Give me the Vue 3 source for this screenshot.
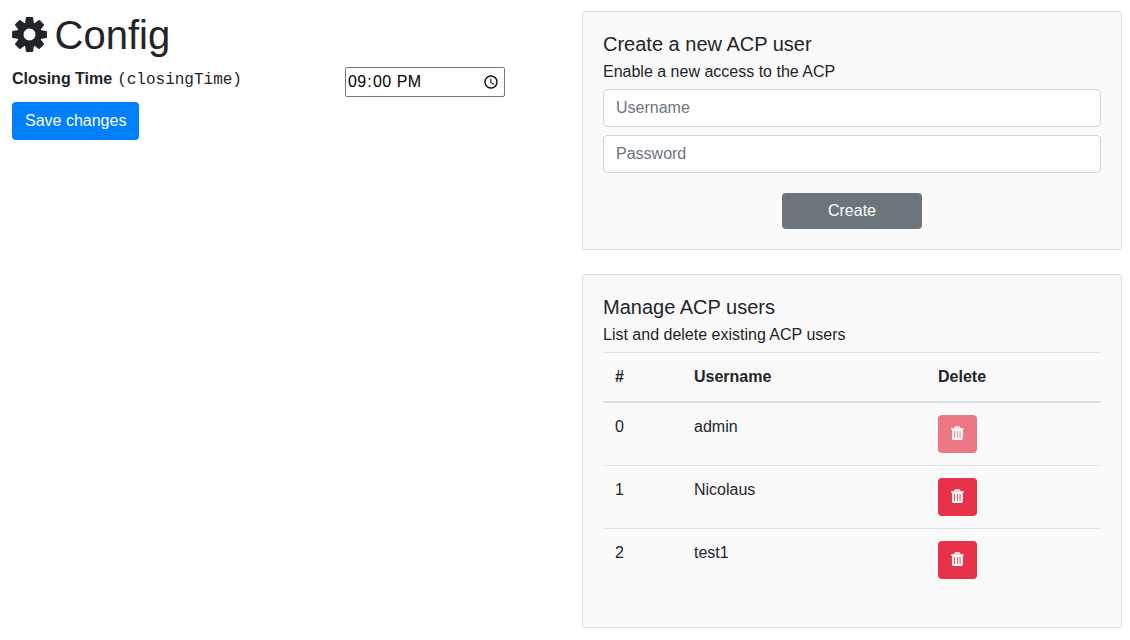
<script setup>
import { ref } from 'vue'

const closingTime = ref('21:00')
const username = ref('')
const password = ref('')
const users = ref([
  { name: 'admin', locked: true },
  { name: 'Nicolaus', locked: false },
  { name: 'test1', locked: false },
])
const teeth = [0, 45, 90, 135, 180, 225, 270, 315]
const remove = (i) => users.value.splice(i, 1)
</script>

<template>
  <main class="page">
    <section class="config">
      <h1>
        <svg class="gear" viewBox="-17.5 -17.5 35 35" fill="currentColor">
          <path fill-rule="evenodd" d="M-12.3 0a12.3 12.3 0 1 0 24.6 0a12.3 12.3 0 1 0 -24.6 0zM-6 0a6 6 0 1 0 12 0a6 6 0 1 0 -12 0z" />
          <path v-for="a in teeth" :key="a" :transform="`rotate(${a})`" d="M-4.6 -10.5L-3.6 -16.8Q-3.5 -17.4 -2.9 -17.4H2.9Q3.5 -17.4 3.6 -16.8L4.6 -10.5z" />
        </svg>
        <span>Config</span>
      </h1>
      <div class="setting">
        <label for="closing"><b>Closing Time</b> <code>(closingTime)</code></label>
        <input id="closing" v-model="closingTime" class="time" type="time" />
      </div>
      <button class="btn primary">Save changes</button>
    </section>

    <aside class="cards">
      <section class="card">
        <h5>Create a new ACP user</h5>
        <p>Enable a new access to the ACP</p>
        <input v-model="username" class="field" type="text" placeholder="Username" />
        <input v-model="password" class="field" type="password" placeholder="Password" />
        <button class="btn create">Create</button>
      </section>

      <section class="card">
        <h5>Manage ACP users</h5>
        <p>List and delete existing ACP users</p>
        <table>
          <colgroup><col class="c-id" /><col class="c-name" /><col /></colgroup>
          <thead>
            <tr><th>#</th><th>Username</th><th>Delete</th></tr>
          </thead>
          <tbody>
            <tr v-for="(user, i) in users" :key="user.name">
              <td>{{ i }}</td>
              <td>{{ user.name }}</td>
              <td>
                <button class="btn danger" :disabled="user.locked" @click="remove(i)">
                  <svg width="13" height="14" viewBox="0 0 13 14">
                    <path d="M3.8 2.4V1.9Q3.8 1 4.7 1H8Q8.9 1 8.9 1.9V2.4" fill="none" stroke="#fff" stroke-width="1.3" />
                    <path fill="#fff" fill-rule="evenodd" d="M0 2.2H12.7V3.6H11.8V12.6Q11.7 13.9 10.4 13.9H2.3Q1.1 13.9 1 12.6V3.6H0zM3.2 5V12H4.1V5zM5.9 5V12H6.8V5zM8.6 5V12H9.5V5z" />
                  </svg>
                </button>
              </td>
            </tr>
          </tbody>
        </table>
      </section>
    </aside>
  </main>
</template>

<style>
body {
  margin: 0;
  background: #fff;
}
</style>

<style scoped>
* {
  box-sizing: border-box;
}
.page {
  display: grid;
  grid-template-columns: 493px 540px;
  column-gap: 77px;
  padding: 11px 8px 12px 12px;
  align-items: start;
  color: #212529;
  font: 16px/24px "Liberation Sans", Arial, sans-serif;
}
h1, h5, p {
  margin: 0;
  font-weight: 400;
}
h1 {
  display: flex;
  align-items: center;
  gap: 7.5px;
  height: 48px;
  font-size: 40px;
  line-height: 48px;
}
.gear {
  width: 35px;
  height: 35px;
  margin-bottom: 1px;
}
.setting {
  display: flex;
  justify-content: space-between;
  align-items: flex-start;
  height: 30px;
  margin: 8px 0 5px;
}
code {
  margin-left: 0.5px;
  font: 16px/24px "Liberation Mono", monospace;
}
.time {
  width: 160px;
  height: 30px;
  padding: 1px;
  border: 1px solid #767676;
  border-radius: 2px;
  background: #fff;
  color: #000;
  font: 16px/24px "Liberation Sans", Arial, sans-serif;
  letter-spacing: 0.25px;
}
.btn {
  display: block;
  height: 38px;
  padding: 0 13px;
  border: 0;
  border-radius: 4px;
  color: #fff;
  font: inherit;
}
.primary {
  background: #007fff;
}
.cards {
  display: grid;
  row-gap: 24px;
}
.card {
  padding: 20px;
  border: 1px solid #dfdfdf;
  border-radius: 3px;
  background: #fafafa;
}
h5 {
  margin-bottom: 4px;
  font-size: 20px;
  line-height: 24px;
}
p {
  margin-bottom: 5px;
}
.field {
  display: block;
  width: 100%;
  height: 38px;
  margin-bottom: 8px;
  padding: 6px 12px;
  border: 1px solid #ced4da;
  border-radius: 4px;
  background: #fff;
  font: inherit;
}
.field::placeholder {
  color: #6c757d;
  opacity: 1;
}
.create {
  width: 140px;
  height: 36px;
  margin: 20px auto 0;
  background: #6c757a;
}
table {
  width: 100%;
  margin-bottom: 16px;
  border-collapse: collapse;
  table-layout: fixed;
}
.c-id {
  width: 79px;
}
.c-name {
  width: 244px;
}
th, td {
  padding: 12px;
  border-top: 1px solid #dee2e6;
  text-align: left;
  vertical-align: top;
}
th {
  border-bottom: 2px solid #dee2e6;
}
.danger {
  display: flex;
  align-items: center;
  justify-content: center;
  width: 39px;
  padding: 0 0 2px;
  background: #e63349;
}
.danger:disabled {
  opacity: .65;
}
</style>
